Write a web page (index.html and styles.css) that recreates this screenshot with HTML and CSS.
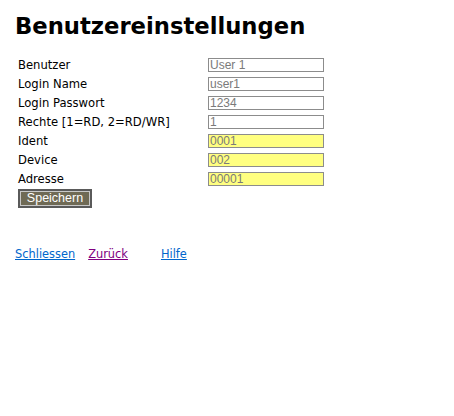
FILE: index.html
```html
<!DOCTYPE html>
<html>
<head>
<meta charset="utf-8">
<link rel="stylesheet" href="styles.css">
</head>
<body>
<h1 class="title">Benutzereinstellungen</h1>
<form class="form">
  <div class="row"><span class="label">Benutzer</span><input class="field" value="User 1"></div>
  <div class="row"><span class="label">Login Name</span><input class="field" value="user1"></div>
  <div class="row"><span class="label">Login Passwort</span><input class="field" value="1234"></div>
  <div class="row"><span class="label">Rechte [1=RD, 2=RD/WR]</span><input class="field" value="1"></div>
  <div class="row"><span class="label">Ident</span><input class="field hl" value="0001"></div>
  <div class="row"><span class="label">Device</span><input class="field hl" value="002"></div>
  <div class="row"><span class="label">Adresse</span><input class="field hl" value="00001"></div>
  <div class="actions"><button type="button" class="btn">Speichern</button></div>
</form>
<nav class="links">
  <a href="#" class="link">Schliessen</a>
  <a href="#" class="link visited">Zurück</a>
  <a href="#" class="link help">Hilfe</a>
</nav>
</body>
</html>
```
FILE: styles.css
```css
html, body { background: #fff; }
body {
  margin: 0;
  padding: 0 15px;
  font-family: "DejaVu Sans", Verdana, sans-serif;
  font-size: 11.6px;
  color: #000;
}
.title {
  margin: 11px 0 14px 0;
  font-size: 22.7px;
  font-weight: bold;
  line-height: 30px;
}
.form {
  display: flex;
  flex-direction: column;
  padding-left: 3px;
}
.row {
  display: grid;
  grid-template-columns: 190px 116px;
  height: 19px;
  align-items: center;
}
.label { line-height: 14px; padding-top: 1px; }
.field {
  box-sizing: border-box;
  width: 116px;
  height: 14px;
  margin: 0;
  padding: 0 1px;
  border: 1px solid #8c8c8c;
  background: #fff;
  font-family: "Liberation Sans", Arial, sans-serif;
  font-size: 12px;
  color: #7a7a7a;
  line-height: 12px;
}
.field.hl { background: #ffff80; }
.actions { margin-top: 1px; }
.btn {
  box-sizing: border-box;
  width: 74px;
  height: 19px;
  margin: 0;
  padding: 0;
  background: #6f6a55;
  color: #fff;
  border: 2px solid #5a5a5a;
  outline: 1px solid #c8c8c8;
  outline-offset: -3px;
  font-family: "Liberation Sans", Arial, sans-serif;
  font-size: 12.5px;
  line-height: 15px;
}
.links {
  margin-top: 39px;
  display: flex;
}
.link {
  color: #0066cc;
  font-size: 11.4px;
}
.link.visited { color: #800080; margin-left: 13px; }
.link.help { margin-left: 33px; }
```
